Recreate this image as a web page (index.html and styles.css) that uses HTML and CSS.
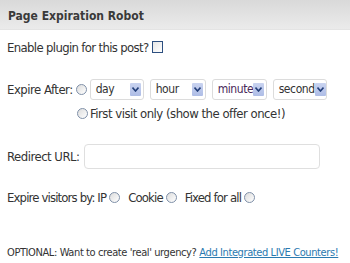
FILE: index.html
```html
<!DOCTYPE html>
<html>
<head>
<meta charset="utf-8">
<link rel="stylesheet" href="styles.css">
</head>
<body>
<div class="box">
  <div class="header">Page Expiration Robot</div>
  <div class="content">
    <div class="row r-enable">Enable plugin for this post?<span class="check"></span></div>
    <div class="row r-expire">
      <span class="label">Expire After:</span>
      <span class="radio"></span>
      <span class="select s-day"><span class="val">day</span><span class="arrow"><svg width="7" height="5" viewBox="0 0 7 5"><path d="M0.5 0.5 L3.5 4 L6.5 0.5" fill="none" stroke="#233f7a" stroke-width="1.6"/></svg></span></span>
      <span class="select s-hour"><span class="val">hour</span><span class="arrow"><svg width="7" height="5" viewBox="0 0 7 5"><path d="M0.5 0.5 L3.5 4 L6.5 0.5" fill="none" stroke="#233f7a" stroke-width="1.6"/></svg></span></span>
      <span class="select s-minute"><span class="val purple">minute</span><span class="arrow"><svg width="7" height="5" viewBox="0 0 7 5"><path d="M0.5 0.5 L3.5 4 L6.5 0.5" fill="none" stroke="#233f7a" stroke-width="1.6"/></svg></span></span>
      <span class="select s-second"><span class="val">second</span><span class="arrow"><svg width="7" height="5" viewBox="0 0 7 5"><path d="M0.5 0.5 L3.5 4 L6.5 0.5" fill="none" stroke="#233f7a" stroke-width="1.6"/></svg></span></span>
    </div>
    <div class="row r-first"><span class="radio"></span>First visit only (show the offer once!)</div>
    <div class="row r-url"><span class="label">Redirect URL:</span><span class="input"></span></div>
    <div class="row r-visitors"><span class="t">Expire visitors by: IP</span><span class="radio"></span><span class="t">Cookie</span><span class="radio"></span><span class="t">Fixed for all</span><span class="radio"></span></div>
    <div class="row r-optional">OPTIONAL: Want to create 'real' urgency? <a href="#">Add Integrated LIVE Counters!</a></div>
  </div>
</div>
</body>
</html>
```
FILE: styles.css
```css
html, body {
  margin: 0;
  padding: 0;
  background: #ffffff;
}
body {
  width: 350px;
  height: 263px;
  overflow: hidden;
  font-family: "DejaVu Sans Condensed", "DejaVu Sans", sans-serif;
  font-size: 13px;
  letter-spacing: -0.5px;
  color: #333333;
}
.box {
  width: 350px;
}
.header {
  height: 30px;
  box-sizing: border-box;
  padding: 9px 0 0 8px;
  background: linear-gradient(#d9d9d9, #ebebeb);
  border-bottom: 1px solid #e4e4e4;
  font-weight: bold;
  font-size: 12px;
  letter-spacing: 0;
  color: #3a3a3a;
}
.content {
  padding: 0 7px;
}
.row {
  display: flex;
  align-items: center;
  white-space: nowrap;
}
.r-enable {
  height: 16px;
  margin-top: 9px;
  letter-spacing: -0.65px;
}
.check {
  display: inline-block;
  width: 9px;
  height: 10px;
  border: 1px solid #2d4f80;
  background: linear-gradient(135deg, #e6e6e6, #ffffff);
  margin-left: 3px;
}
.radio {
  display: inline-block;
  width: 9px;
  height: 9px;
  border: 1px solid #7f90a8;
  border-radius: 50%;
  background: linear-gradient(135deg, #dcdcdc, #ffffff);
  flex: none;
}
.r-expire {
  margin-top: 23px;
  height: 22px;
}
.r-expire .label {
  margin-right: 3px;
}
.select {
  display: inline-flex;
  align-items: center;
  box-sizing: border-box;
  height: 21px;
  border: 1px solid #dcdcdc;
  border-radius: 3px;
  padding: 0 2px 0 5px;
  justify-content: space-between;
  margin-left: 6px;
}
.r-expire .radio + .select {
  margin-left: 3px;
}
.val {
  font-size: 12px;
  letter-spacing: -0.4px;
}
.s-day { width: 54px; }
.s-hour { width: 56px; }
.s-minute { width: 55px; }
.s-second { width: 54px; }
.val.purple { color: #4a2a5a; }
.arrow {
  display: inline-flex;
  align-items: center;
  justify-content: center;
  width: 11px;
  height: 13px;
  background: linear-gradient(#c9d3f0, #aebde6);
  border-radius: 1px;
  flex: none;
}
.r-first {
  margin-top: 5px;
  height: 16px;
  padding-left: 70px;
}
.r-first .radio {
  margin-right: 2px;
}
.r-url {
  margin-top: 23px;
  height: 25px;
}
.input {
  display: inline-block;
  box-sizing: border-box;
  width: 236px;
  height: 25px;
  border: 1px solid #dfdfdf;
  border-radius: 4px;
  margin-left: 4px;
}
.r-visitors {
  margin-top: 20px;
  height: 16px;
  letter-spacing: -0.85px;
}
.r-visitors .radio {
  margin-left: 3px;
  margin-right: 8px;
}
.r-optional {
  margin-top: 40px;
  height: 14px;
  font-size: 11px;
  letter-spacing: -0.4px;
}
.r-optional a {
  color: #2a7ab0;
  text-decoration: underline;
  margin-left: 3px;
}
```
